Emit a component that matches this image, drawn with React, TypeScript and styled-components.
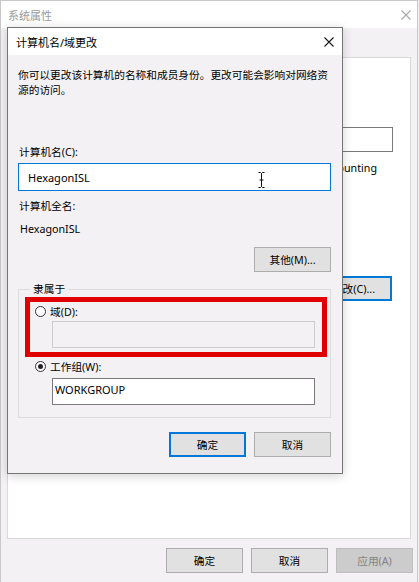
import React from 'react';
import styled, { createGlobalStyle } from 'styled-components';

const GlobalStyle = createGlobalStyle`
  html, body {
    margin: 0;
    padding: 0;
  }
  body {
    width: 419px;
    height: 582px;
    overflow: hidden;
    background: #f4f1f5;
    color: #000;
    font-family: "Segoe UI", "Noto Sans", "Noto Sans CJK SC", sans-serif;
    font-size: 10.7px;
  }
`;

const Screen = styled.div`
  position: relative;
  width: 419px;
  height: 582px;
  overflow: hidden;
`;

const OuterWindow = styled.div`
  width: 418px;
  height: 582px;
  box-sizing: border-box;
  border: 1px solid #c9c9c9;
  border-bottom: none;
  background: #f4f1f5;
  display: flex;
  flex-direction: column;
`;

const TitleBar = styled.div<{ $inactive?: boolean; $padRight: number }>`
  height: 27px;
  flex-shrink: 0;
  display: flex;
  align-items: center;
  justify-content: space-between;
  padding: 0 ${(p) => p.$padRight}px 0 ${(p) => (p.$inactive ? 7 : 8)}px;
  background: #fff;
  color: ${(p) => (p.$inactive ? '#9a9a9a' : '#000')};
  font-size: 11px;
`;

const OuterBody = styled.div`
  flex: 1;
  display: flex;
  flex-direction: column;
  padding: 29px 6px 0 6px;
`;

// the tab page of 系统属性; its left part lies under the dialog
const TabPage = styled.div`
  height: 482px;
  box-sizing: border-box;
  background: #fff;
  border: 1px solid #d9d9d9;
  display: flex;
  flex-direction: column;
  padding: 0 17px 0 12px;
`;

const FormRow = styled.div<{ $top: number }>`
  margin-top: ${(p) => p.$top}px;
  display: flex;
  align-items: center;
  justify-content: flex-end;
`;

const PlainBox = styled.div<{ $width: number }>`
  width: ${(p) => p.$width}px;
  height: 25px;
  box-sizing: border-box;
  border: 1px solid #7a7a7a;
  background: #fff;
`;

const HintLine = styled.div`
  margin-top: 9px;
  line-height: 15px;
  white-space: nowrap;
  text-align: right;
  padding-right: 16px;
`;

const Footer = styled.div`
  margin-top: 9px;
  margin-right: -2px;
  display: flex;
  justify-content: flex-end;
  gap: 8px;
`;

const Button = styled.button<{ $focused?: boolean }>`
  width: 77px;
  height: 25px;
  box-sizing: border-box;
  padding: 0;
  font: inherit;
  color: #000;
  background: #e1e1e1;
  border: 1px solid ${(p) => (p.$focused ? '#0078d7' : '#adadad')};
  box-shadow: ${(p) => (p.$focused ? 'inset 0 0 0 1px #0078d7' : 'none')};

  &:disabled {
    background: #cccccc;
    border-color: #bfbfbf;
    color: #838383;
  }
`;

const Dialog = styled.div`
  position: absolute;
  left: 7px;
  top: 27px;
  width: 336px;
  height: 447px;
  box-sizing: border-box;
  border: 1px solid #767676;
  background: #f4f1f5;
  display: flex;
  flex-direction: column;
  box-shadow: 0 2px 10px rgba(0, 0, 0, 0.18);
`;

const DialogBody = styled.div`
  display: flex;
  flex-direction: column;
  padding: 13px 11px 0 10px;
`;

const Description = styled.p`
  margin: 0 -8px 0 0;
  line-height: 15px;
  white-space: nowrap;
`;

const Label = styled.div<{ $top: number; $indent?: number }>`
  margin-top: ${(p) => p.$top}px;
  margin-left: ${(p) => p.$indent || 1}px;
  line-height: 15px;
`;

const InputWrap = styled.div<{ $top: number }>`
  position: relative;
  margin-top: ${(p) => p.$top}px;
`;

const TextInput = styled.input<{ $variant: 'focus' | 'normal' | 'disabled' }>`
  display: block;
  box-sizing: border-box;
  width: 100%;
  height: ${(p) => (p.$variant === 'focus' ? 28 : 27)}px;
  margin: 0;
  padding: ${(p) => (p.$variant === 'focus' ? '0 0 0 9px' : '0 0 5px 2px')};
  font: inherit;
  font-size: 11px;
  color: #000;
  outline: none;
  border: 1px solid
    ${(p) => (p.$variant === 'focus' ? '#0078d7' : p.$variant === 'disabled' ? '#cccccc' : '#7a7a7a')};
  background: ${(p) => (p.$variant === 'disabled' ? '#f4f1f5' : '#fff')};
`;

const TextCursor = styled.svg`
  position: absolute;
  left: 240px;
  top: 9px;
`;

const SideButton = styled(Button)`
  align-self: flex-end;
`;

const Group = styled.fieldset`
  margin: 10px 0 0 0;
  padding: 0 3px 12px 6px;
  border: 1px solid #dcdcdc;
  min-width: 0;
  display: flex;
  flex-direction: column;
`;

const Legend = styled.legend`
  margin-left: 5px;
  padding: 0 3px;
  line-height: 15px;
`;

const Highlight = styled.div`
  height: 60px;
  box-sizing: border-box;
  border: 5px solid #e10000;
  padding: 2px 6px 4px 5px;
  display: flex;
  flex-direction: column;
  gap: 2px;
`;

const OptionBlock = styled.div`
  margin-top: 2px;
  padding-left: 10px;
  display: flex;
  flex-direction: column;
`;

const RadioRow = styled.div`
  height: 15px;
  display: flex;
  align-items: center;
  gap: 4px;
`;

const Radio = styled.span<{ $checked?: boolean }>`
  position: relative;
  width: 11px;
  height: 11px;
  box-sizing: border-box;
  border: 1px solid #333;
  border-radius: 50%;
  background: #fff;

  &::after {
    content: '';
    display: ${(p) => (p.$checked ? 'block' : 'none')};
    position: absolute;
    left: 2px;
    top: 2px;
    width: 5px;
    height: 5px;
    border-radius: 50%;
    background: #222;
  }
`;

const SubField = styled.div<{ $top: number; $indent: number }>`
  margin-top: ${(p) => p.$top}px;
  margin-left: ${(p) => p.$indent}px;
  width: 263px;
`;

const DialogFooter = styled.div`
  margin-top: 14px;
  display: flex;
  justify-content: flex-end;
  gap: 8px;
`;

const CloseIcon = ({ color }: { color: string }) => (
  <svg width="10" height="10" viewBox="0 0 10 10">
    <path d="M0.5 0.5 L9.5 9.5 M9.5 0.5 L0.5 9.5" stroke={color} strokeWidth="1.1" fill="none" />
  </svg>
);

export default function App() {
  return (
    <Screen>
      <GlobalStyle />
      <OuterWindow>
        <TitleBar $inactive $padRight={6}>
          <span>系统属性</span>
          <CloseIcon color="#a8a8a8" />
        </TitleBar>
        <OuterBody>
          <TabPage>
            <FormRow $top={69}>
              <PlainBox $width={250} />
            </FormRow>
            <HintLine>例如: "IIS Production Server" 或 "Accounting</HintLine>
            <FormRow $top={100} style={{ marginRight: 1 }}>
              <Button $focused>更改(C)...</Button>
            </FormRow>
          </TabPage>
          <Footer>
            <Button>确定</Button>
            <Button>取消</Button>
            <Button disabled>应用(A)</Button>
          </Footer>
        </OuterBody>
      </OuterWindow>

      <Dialog>
        <TitleBar $padRight={8}>
          <span>计算机名/域更改</span>
          <CloseIcon color="#1a1a1a" />
        </TitleBar>
        <DialogBody>
          <Description>
            你可以更改该计算机的名称和成员身份。更改可能会影响对网络资
            <br />
            源的访问。
          </Description>

          <Label $top={47}>计算机名(C):</Label>
          <InputWrap $top={3}>
            <TextInput $variant="focus" readOnly value="HexagonISL" />
            <TextCursor width="7" height="16" viewBox="0 0 7 16">
              <path d="M0.5 0.5 H2.5 L3.5 1.5 L4.5 0.5 H6.5 M3.5 1.5 V14.5 M0.5 15.5 H2.5 L3.5 14.5 L4.5 15.5 H6.5 M1.5 8 H5.5" stroke="#111" strokeWidth="1" fill="none" />
            </TextCursor>
          </InputWrap>

          <Label $top={8}>计算机全名:</Label>
          <Label $top={8} $indent={2}>HexagonISL</Label>

          <SideButton style={{ marginTop: 10 }}>其他(M)...</SideButton>

          <Group>
            <Legend>隶属于</Legend>
            <Highlight>
              <RadioRow>
                <Radio />
                <span>域(D):</span>
              </RadioRow>
              <SubField $top={0} $indent={17}>
                <TextInput $variant="disabled" readOnly disabled value="" />
              </SubField>
            </Highlight>
            <OptionBlock>
              <RadioRow>
                <Radio $checked />
                <span>工作组(W):</span>
              </RadioRow>
              <SubField $top={4} $indent={17}>
                <TextInput $variant="normal" readOnly value="WORKGROUP" />
              </SubField>
            </OptionBlock>
          </Group>

          <DialogFooter>
            <Button $focused>确定</Button>
            <Button>取消</Button>
          </DialogFooter>
        </DialogBody>
      </Dialog>
    </Screen>
  );
}
